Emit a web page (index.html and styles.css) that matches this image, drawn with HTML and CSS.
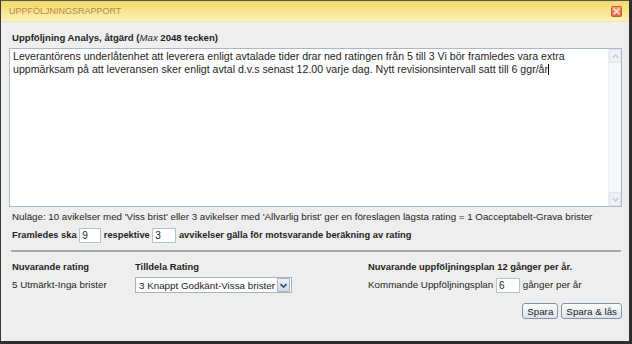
FILE: index.html
```html
<!DOCTYPE html>
<html lang="sv">

<head>
    <meta charset="UTF-8">
    <meta name="viewport" content="width=device-width, initial-scale=1.0">
    <title>Uppföljningsrapport</title>
    <link rel="stylesheet" href="styles.css">
</head>

<body>
    <div class="dialog">
        <header class="titlebar">
            <span class="title">UPPFÖLJNINGSRAPPORT</span>
            <svg class="close" width="11" height="11" viewBox="0 0 11 11">
                <defs>
                    <linearGradient id="closeGrad" x1="0" y1="0" x2="0" y2="1">
                        <stop offset="0" stop-color="#f7a27c" />
                        <stop offset="1" stop-color="#e0603c" />
                    </linearGradient>
                </defs>
                <rect x="0.5" y="0.5" width="10" height="10" rx="1" fill="url(#closeGrad)" stroke="#c8583a" />
                <path d="M3 3 L8 8 M8 3 L3 8" stroke="#fde2d6" stroke-width="1.6" stroke-linecap="round" />
            </svg>
        </header>

        <section class="content">
            <label class="field-label">Uppföljning Analys, åtgärd (<em>Max</em> 2048 tecken)</label>

            <div class="textbox">
                <div class="textbox-text">Leverantörens underlåtenhet att leverera enligt avtalade tider drar ned ratingen från 5 till 3 Vi bör framledes vara extra<br>uppmärksam på att leveransen sker enligt avtal d.v.s senast 12.00 varje dag. Nytt revisionsintervall satt till 6 ggr/år<span class="caret"></span></div>
                <div class="scrollbar">
                    <span class="scroll-btn">
                        <svg width="7" height="5" viewBox="0 0 7 5"><path d="M0.5 4 L3.5 1 L6.5 4" fill="none" stroke="#c4cbd4" stroke-width="1.3" /></svg>
                    </span>
                    <span class="scroll-btn">
                        <svg width="7" height="5" viewBox="0 0 7 5"><path d="M0.5 1 L3.5 4 L6.5 1" fill="none" stroke="#c4cbd4" stroke-width="1.3" /></svg>
                    </span>
                </div>
            </div>

            <p class="status">Nuläge: 10 avikelser med 'Viss brist' eller 3 avikelser med 'Allvarlig brist' ger en föreslagen lägsta rating = 1 Oacceptabelt-Grava brister</p>

            <p class="factor">Framledes ska <input class="num" type="text" value="9"> respektive <input class="num wide" type="text" value="3"> avvikelser gälla för motsvarande beräkning av rating</p>

            <hr class="divider">

            <div class="rating-grid">
                <span class="heading">Nuvarande rating</span>
                <span class="heading">Tilldela Rating</span>
                <span class="heading">Nuvarande uppföljningsplan 12 gånger per år.</span>

                <span class="value">5 Utmärkt-Inga brister</span>
                <div class="select">
                    <span class="select-text">3 Knappt Godkänt-Vissa brister</span>
                    <span class="select-arrow">
                        <svg width="7" height="5" viewBox="0 0 7 5"><path d="M0.5 1 L3.5 4 L6.5 1" fill="none" stroke="#3b4a63" stroke-width="1.6" /></svg>
                    </span>
                </div>
                <span class="value">Kommande Uppföljningsplan <input class="num wide" type="text" value="6"> gånger per år</span>
            </div>

            <div class="actions">
                <button type="button" class="btn">Spara</button>
                <button type="button" class="btn">Spara &amp; lås</button>
            </div>
        </section>
    </div>
</body>

</html>
```

FILE: styles.css
```css
/* dialog frame */
html,
body {
    height: 100%;
}

body {
    margin: 0;
    background-color: #2e2e2e;
    font-family: "Liberation Sans Narrow", "Liberation Sans", sans-serif;
    font-size: 9.8px;
    color: #1e1e1e;
}

.dialog {
    box-sizing: border-box;
    height: 341px;
    margin-right: 3px;
    border-left: 1px solid #3a3a3a;
    border-top: 1px solid #555;
    background-color: #eeeeee;
    display: flex;
    flex-direction: column;
}

.titlebar {
    height: 20px;
    display: flex;
    align-items: center;
    justify-content: space-between;
    padding: 0 7px 0 8px;
    background: linear-gradient(#f2da68, #fbf0b8);
    border-bottom: 1px solid #f3e6a6;
}

.title {
    font-size: 9px;
    color: #c0883a;
}

.close {
    display: block;
    margin-top: 1px;
}

/* content */
.content {
    flex: 1;
    padding: 9px 7px 0 8px;
}

.field-label {
    display: block;
    padding-left: 3px;
    font-weight: bold;
    font-size: 9.6px;
    line-height: 14px;
    margin-bottom: 3px;
}

.field-label em {
    font-weight: normal;
}

.textbox {
    height: 159px;
    box-sizing: border-box;
    border: 1px solid #a9b8c8;
    background-color: #fff;
    display: flex;
}

.textbox-text {
    flex: 1;
    padding: 1px 3px;
    font-size: 10.6px;
    line-height: 12.5px;
    white-space: nowrap;
}

.caret {
    display: inline-block;
    width: 1px;
    height: 11px;
    background-color: #000;
    vertical-align: -2px;
}

.scrollbar {
    width: 12px;
    background-color: #f7f8fa;
    border-left: 1px solid #edf0f3;
    display: flex;
    flex-direction: column;
    justify-content: space-between;
}

.scroll-btn {
    height: 12px;
    display: flex;
    align-items: center;
    justify-content: center;
    background-color: #eef1f4;
    border: 1px solid #e2e6ea;
}

.status {
    margin: 3px 0 0;
    padding-left: 3px;
    line-height: 14px;
    font-size: 9.75px;
}

.factor {
    margin: 3px 0 0;
    padding-left: 3px;
    font-weight: bold;
    font-size: 9.3px;
    line-height: 16px;
    height: 16px;
    white-space: nowrap;
}

.num {
    box-sizing: border-box;
    width: 22px;
    height: 15px;
    margin: 0;
    padding: 0 2px;
    border: 1px solid #b5c3d1;
    background-color: #fff;
    font-family: inherit;
    font-size: 10px;
    font-weight: normal;
    color: #1e1e1e;
    vertical-align: middle;
}

.num.wide {
    width: 24px;
}

.divider {
    margin: 7px 1px 0 2px;
    border: none;
    height: 2px;
    background-color: #a6a6a6;
}

/* rating block */
.rating-grid {
    display: grid;
    grid-template-columns: 123px 233px 1fr;
    grid-template-rows: 14px 16px;
    row-gap: 4px;
    align-items: center;
    margin-top: 7px;
    padding-left: 3px;
}

.heading {
    font-weight: bold;
    font-size: 9.4px;
}

.value {
    line-height: 16px;
    white-space: nowrap;
}

.select {
    box-sizing: border-box;
    width: 157px;
    height: 16px;
    display: flex;
    align-items: center;
    border: 1px solid #a3b3c4;
    background-color: #fff;
    padding: 1px;
    white-space: nowrap;
}

.select-text {
    flex: 1;
    padding-left: 2px;
    overflow: hidden;
}

.select-arrow {
    width: 11px;
    height: 12px;
    display: flex;
    align-items: center;
    justify-content: center;
    background: linear-gradient(#eef2f8, #cfd8e6);
    border: 1px solid #a8b6c9;
    border-radius: 1px;
}

.actions {
    display: flex;
    justify-content: flex-end;
    gap: 3px;
    margin-top: 10px;
}

.btn {
    height: 16px;
    padding: 0 4px;
    border: 1px solid #8193a8;
    border-radius: 3px;
    background: linear-gradient(#fbfcfd, #dde3ea);
    font-family: inherit;
    font-size: 9.8px;
    color: #1e1e1e;
    cursor: pointer;
}
```
